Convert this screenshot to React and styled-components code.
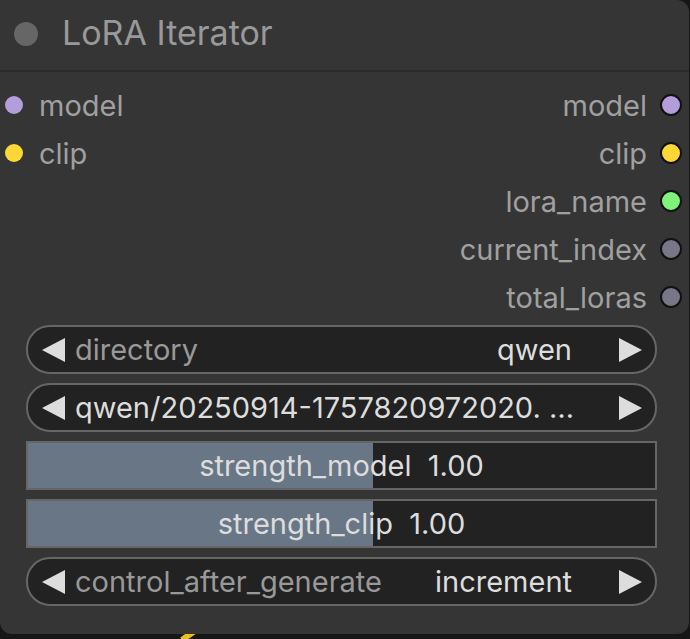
import React from 'react';
import styled, { createGlobalStyle } from 'styled-components';

const GlobalStyle = createGlobalStyle`
    html, body {
        margin: 0;
        padding: 0;
        background: #161616;
        overflow: hidden;
    }
    body {
        font-family: Inter, "Noto Sans", sans-serif;
    }
`;

const Canvas = styled.div`
    position: relative;
    width: 690px;
    height: 639px;
    background: #161616;
`;

const Wire = styled.svg`
    position: absolute;
    left: 170px;
    top: 628px;
`;

const Node = styled.div`
    position: relative;
    width: 689px;
    height: 634px;
    background: #353535;
    border-radius: 0 12px 12px 12px;
    display: flex;
    flex-direction: column;
`;

const Title = styled.div`
    height: 72px;
    box-sizing: border-box;
    padding: 0 0 5px 14px;
    display: flex;
    align-items: center;
    gap: 24px;
    border-bottom: 2px solid #2b2b2b;
    color: #999;
    font-size: 34px;
`;

const TitleDot = styled.span`
    width: 24px;
    height: 24px;
    margin-top: 3px;
    border-radius: 50%;
    background: #666;
`;

const Slots = styled.div`
    padding-top: 9px;
    display: flex;
    flex-direction: column;
`;

const Row = styled.div`
    height: 48px;
    display: flex;
    align-items: center;
    justify-content: space-between;
    font-size: 29px;
    color: #a0a0a0;
`;

const Slot = styled.div`
    display: flex;
    align-items: center;
    gap: ${p => (p.$out ? '13px' : '16px')};
    padding: ${p => (p.$out ? '0 7px 0 0' : '0 0 0 5px')};
`;

const Dot = styled.span`
    width: ${p => (p.$out ? '22px' : '18px')};
    height: ${p => (p.$out ? '22px' : '18px')};
    border-radius: 50%;
    background: ${p => p.$color};
    border: ${p => (p.$out ? '2px solid #111' : '0')};
    box-sizing: border-box;
`;

const Widgets = styled.div`
    margin-top: 4px;
    padding: 0 32px 0 26px;
    display: flex;
    flex-direction: column;
    gap: 9px;
`;

const Combo = styled.div`
    height: 49px;
    box-sizing: border-box;
    border: 2px solid #666;
    border-radius: 24px;
    background: #222;
    display: flex;
    align-items: center;
    padding: 0 13px 0 14px;
    font-size: 29px;
`;

const Label = styled.span`
    color: ${p => (p.$bright ? '#ddd' : '#999')};
    flex: 1;
    margin-left: 10px;
    white-space: nowrap;
`;

const Value = styled.span`
    color: #ddd;
    margin-right: 47px;
    white-space: nowrap;
`;

const Slider = styled.div`
    position: relative;
    height: 49px;
    box-sizing: border-box;
    border: 2px solid #666;
    background: #222;
    display: flex;
    align-items: center;
    justify-content: center;
    font-size: 29px;
    color: #ddd;
    white-space: pre;
`;

const Fill = styled.div`
    position: absolute;
    left: 0;
    top: 0;
    bottom: 0;
    background: #687686;
`;

const SliderText = styled.span`
    position: relative;
`;

const Arrow = ({ right }) => (
    <svg width="23" height="24" viewBox="0 0 23 24">
        <polygon points={right ? '0,0 23,12 0,24' : '23,0 0,12 23,24'} fill="#ddd" />
    </svg>
);

const inputs = [
    { name: 'model', color: '#b39ddb' },
    { name: 'clip', color: '#fdd835' },
];

const outputs = [
    { name: 'model', color: '#b39ddb' },
    { name: 'clip', color: '#fdd835' },
    { name: 'lora_name', color: '#7ef27a' },
    { name: 'current_index', color: '#777788' },
    { name: 'total_loras', color: '#777788' },
];

const sliders = [
    { name: 'strength_model', value: 1.0 },
    { name: 'strength_clip', value: 1.0 },
];

function StrengthSlider({ name, value }) {
    const pct = 55;
    return (
        <Slider>
            <Fill style={{ width: `${pct}%` }} />
            <SliderText>{name}  {value.toFixed(2)}</SliderText>
        </Slider>
    );
}

export default function App() {
    return (
        <Canvas>
            <GlobalStyle />
            <Wire width="40" height="11" viewBox="0 0 40 11">
                <path d="M12 12 L26 2" stroke="#e6c01e" strokeWidth="6" fill="none" />
            </Wire>
            <Node>
                <Title>
                    <TitleDot />
                    LoRA Iterator
                </Title>
                <Slots>
                    {outputs.map((out, i) => (
                        <Row key={out.name + i}>
                            {inputs[i] ? (
                                <Slot>
                                    <Dot $color={inputs[i].color} />
                                    {inputs[i].name}
                                </Slot>
                            ) : <span />}
                            <Slot $out>
                                {out.name}
                                <Dot $out $color={out.color} />
                            </Slot>
                        </Row>
                    ))}
                </Slots>
                <Widgets>
                    <Combo>
                        <Arrow />
                        <Label>directory</Label>
                        <Value>qwen</Value>
                        <Arrow right />
                    </Combo>
                    <Combo>
                        <Arrow />
                        <Label $bright>qwen/20250914-1757820972020. …</Label>
                        <Arrow right />
                    </Combo>
                    {sliders.map(s => <StrengthSlider key={s.name} {...s} />)}
                    <Combo>
                        <Arrow />
                        <Label>control_after_generate</Label>
                        <Value>increment</Value>
                        <Arrow right />
                    </Combo>
                </Widgets>
            </Node>
        </Canvas>
    );
}
